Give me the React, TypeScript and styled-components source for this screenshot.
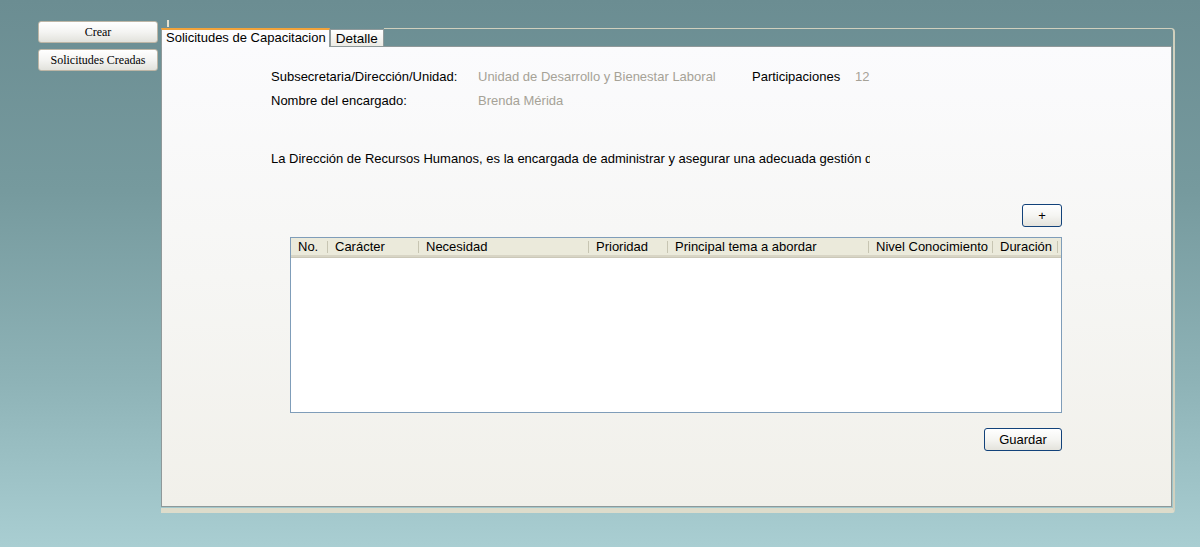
import React from "react";
import styled, { createGlobalStyle } from "styled-components";

const GlobalStyle = createGlobalStyle`
  html, body {
    margin: 0;
    padding: 0;
    height: 547px;
    overflow: hidden;
  }
  body {
    background: linear-gradient(to bottom, #6b8d92 0%, #769a9e 35%, #8eb3b7 70%, #a9ced2 100%);
    font-family: "Liberation Sans", Arial, sans-serif;
  }
`;

const Page = styled("div")`
  width: 1200px;
  height: 547px;
  box-sizing: border-box;
  padding: 21px 0 0 38px;
  display: flex;
  align-items: flex-start;
  gap: 3px;
`;

const SideMenu = styled("div")`
  width: 120px;
  display: flex;
  flex-direction: column;
  gap: 6px;
`;

const SideButton = styled("button")`
  height: 22px;
  width: 120px;
  padding: 0;
  border: 1px solid #bdb6a6;
  border-radius: 3px;
  background: linear-gradient(to bottom, #ffffff 0%, #f4f4f2 50%, #e2e2dc 100%);
  font-family: "Liberation Serif", "Times New Roman", serif;
  font-size: 12px;
  color: #000;
  cursor: pointer;
`;

const Panel = styled("div")`
  position: relative;
  margin-top: 6px;
  width: 1014px;
  display: flex;
  flex-direction: column;

  &::before {
    content: "";
    position: absolute;
    left: 6px;
    top: -7px;
    width: 2px;
    height: 7px;
    background: #e4e0cf;
  }
`;

const TabRow = styled("div")`
  height: 19px;
  display: flex;
  align-items: flex-end;
`;

const Tab = styled("div")<{ $active?: boolean }>`
  box-sizing: border-box;
  height: ${(p) => (p.$active ? "19px" : "17px")};
  padding: ${(p) => (p.$active ? "0 3px 0 4px" : "1px 5px 0 5px")};
  margin-bottom: ${(p) => (p.$active ? "-1px" : "0")};
  border: 1px solid #919b9c;
  border-bottom: none;
  border-top: ${(p) => (p.$active ? "2px solid #f3a33a" : "1px solid #919b9c")};
  background: ${(p) =>
    p.$active ? "#fcfcfe" : "linear-gradient(to bottom, #ffffff, #ecebe5)"};
  font-size: ${(p) => (p.$active ? "13px" : "13.5px")};
  line-height: 16px;
  color: #000;
  white-space: nowrap;
  position: relative;
  z-index: ${(p) => (p.$active ? 2 : 1)};
`;

const TabFiller = styled("div")`
  flex: 1;
  height: 18px;
  box-sizing: border-box;
  border-top: 1px solid #cfcfbd;
  border-right: 2px solid #cfcfbd;
  border-top-right-radius: 4px;
`;

const Body = styled("div")`
  border-right: 2px solid #d2d1bf;
  border-bottom: 5px solid #dddccb;
  border-bottom-right-radius: 3px;
  padding: 0 1px 1px 0;
`;

const Content = styled("div")`
  height: 461px;
  box-sizing: border-box;
  border: 1px solid #8f999a;
  background: linear-gradient(to bottom, #fbfbfd 0%, #f6f6f4 50%, #f1f0ea 100%);
  padding: 23px 0 0 109px;
`;

const InfoRow = styled("div")`
  display: flex;
  height: 24px;
  font-size: 13px;
  line-height: 14px;
`;

const Label = styled("span")<{ $w?: number }>`
  width: ${(p) => (p.$w ? `${p.$w}px` : "auto")};
  color: #000;
  flex-shrink: 0;
`;

const Value = styled("span")<{ $w?: number }>`
  width: ${(p) => (p.$w ? `${p.$w}px` : "auto")};
  color: #a6a297;
  flex-shrink: 0;
`;

const Description = styled("p")`
  margin: 34px 0 0 0;
  width: 599px;
  overflow: hidden;
  white-space: nowrap;
  font-size: 13px;
  line-height: 14px;
  color: #000;
`;

const GridSection = styled("div")`
  width: 772px;
  margin: 38px 0 0 19px;
  display: flex;
  flex-direction: column;
  align-items: flex-end;
`;

const XpButton = styled("button")<{ $w: number }>`
  width: ${(p) => p.$w}px;
  height: 23px;
  padding: 0;
  border: 1px solid #12427a;
  border-radius: 3px;
  background: linear-gradient(to bottom, #ffffff 0%, #f5f5f2 50%, #e4e3dc 100%);
  font-family: "Liberation Sans", Arial, sans-serif;
  font-size: 13px;
  color: #000;
  cursor: pointer;
`;

const Grid = styled("div")`
  align-self: stretch;
  margin: 10px 0 15px 0;
  height: 176px;
  box-sizing: border-box;
  border: 1px solid #7f9db9;
  background: #fff;
`;

const HeaderRow = styled("div")`
  display: flex;
  height: 19px;
  box-sizing: border-box;
  background: #ebeadb;
  border-bottom: 2px solid #d8d5c5;
  box-shadow: 0 1px 0 #cbc8b8;
`;

const HeaderCell = styled("div")<{ $w: number }>`
  position: relative;
  width: ${(p) => p.$w}px;
  box-sizing: border-box;
  padding-left: 7px;
  font-size: 13px;
  line-height: 18px;
  color: #000;
  white-space: nowrap;
  overflow: hidden;

  &::after {
    content: "";
    position: absolute;
    right: 0;
    top: 3px;
    height: 12px;
    width: 1px;
    background: #c7c5b2;
  }
`;

const columns: [string, number][] = [
  ["No.", 37],
  ["Carácter", 91],
  ["Necesidad", 170],
  ["Prioridad", 79],
  ["Principal tema a abordar", 201],
  ["Nivel Conocimiento", 124],
  ["Duración", 65],
];

export default function App() {
  return (
    <>
      <GlobalStyle />
      <Page>
        <SideMenu>
          <SideButton>Crear</SideButton>
          <SideButton>Solicitudes Creadas</SideButton>
        </SideMenu>
        <Panel>
          <TabRow>
            <Tab $active>Solicitudes de Capacitacion</Tab>
            <Tab>Detalle</Tab>
            <TabFiller />
          </TabRow>
          <Body>
            <Content>
              <InfoRow>
                <Label $w={207}>Subsecretaria/Dirección/Unidad:</Label>
                <Value $w={274}>Unidad de Desarrollo y Bienestar Laboral</Value>
                <Label $w={103}>Participaciones</Label>
                <Value>12</Value>
              </InfoRow>
              <InfoRow>
                <Label $w={207}>Nombre del encargado:</Label>
                <Value>Brenda Mérida</Value>
              </InfoRow>
              <Description>
                La Dirección de Recursos Humanos, es la encargada de administrar y asegurar una
                adecuada gestión del talento humano
              </Description>
              <GridSection>
                <XpButton $w={40}>+</XpButton>
                <Grid>
                  <HeaderRow>
                    {columns.map(([name, w]) => (
                      <HeaderCell key={name} $w={w}>
                        {name}
                      </HeaderCell>
                    ))}
                  </HeaderRow>
                </Grid>
                <XpButton $w={78}>Guardar</XpButton>
              </GridSection>
            </Content>
          </Body>
        </Panel>
      </Page>
    </>
  );
}
